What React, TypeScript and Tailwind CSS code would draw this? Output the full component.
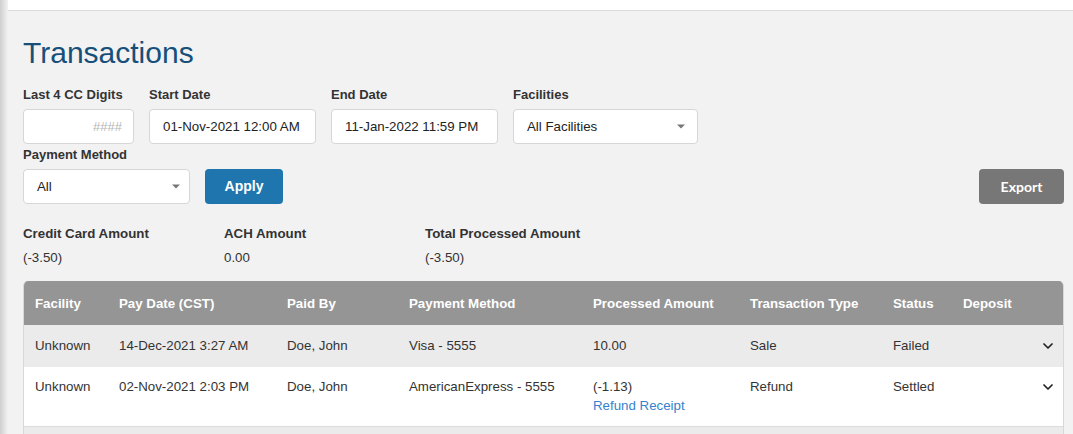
import React from "react";
import { ChevronDown } from "lucide-react";

const Caret = () => (
  <svg width="8" height="5" viewBox="0 0 8 5" className="shrink-0">
    <path d="M0 0.5 L8 0.5 L4 4.5 Z" fill="#777" />
  </svg>
);

const Label = ({ children }: { children: React.ReactNode }) => (
  <div className="text-[13px] leading-[20px] font-bold text-[#333] mb-[4px]">{children}</div>
);

const cols = "grid grid-cols-[84px_168px_122px_184px_157px_143px_70px_1fr]";

export default function App() {
  return (
    <div
      className="flex w-[1073px] h-[434px] overflow-hidden bg-[#f2f2f2] text-[#333]"
      style={{ fontFamily: '"Liberation Sans", Arial, sans-serif' }}
    >
      <div className="w-[8px] shrink-0 bg-gradient-to-r from-[#cfcfcf] to-[#f2f2f2]" />
      <div className="flex-1 flex flex-col">
        <div className="h-[11px] bg-white border-b border-[#dcdcdc] shrink-0" />
        <div className="pl-[15px] pr-[9px]">
          <h1 className="text-[30px] leading-[36px] text-[#16507a] mt-[24px] mb-[14px]">Transactions</h1>

          <div className="flex gap-[15px]">
            <div>
              <Label>Last 4 CC Digits</Label>
              <div className="w-[111px] h-[35px] bg-white border border-[#d6d6d6] rounded-[4px] flex items-center justify-end pr-[11px] text-[13px] text-[#b5b5b5]">
                ####
              </div>
            </div>
            <div>
              <Label>Start Date</Label>
              <div className="w-[167px] h-[35px] bg-white border border-[#d6d6d6] rounded-[4px] flex items-center pl-[13px] text-[13.3px] text-[#222]">
                01-Nov-2021 12:00 AM
              </div>
            </div>
            <div>
              <Label>End Date</Label>
              <div className="w-[167px] h-[35px] bg-white border border-[#d6d6d6] rounded-[4px] flex items-center pl-[13px] text-[13.3px] text-[#222]">
                11-Jan-2022 11:59 PM
              </div>
            </div>
            <div>
              <Label>Facilities</Label>
              <div className="w-[185px] h-[35px] bg-white border border-[#d6d6d6] rounded-[4px] flex items-center justify-between pl-[13px] pr-[12px] text-[13.3px] text-[#222]">
                <span>All Facilities</span>
                <Caret />
              </div>
            </div>
          </div>

          <div className="flex items-end mt-[1px]">
            <div>
              <Label>Payment Method</Label>
              <div className="w-[167px] h-[35px] bg-white border border-[#d6d6d6] rounded-[4px] flex items-center justify-between pl-[13px] pr-[9px] text-[13.3px] text-[#222]">
                <span>All</span>
                <Caret />
              </div>
            </div>
            <button className="ml-[15px] w-[78px] h-[35px] rounded-[4px] bg-[#1f76ae] text-white font-bold text-[14px]">
              Apply
            </button>
            <button
              className="ml-auto w-[85px] h-[35px] rounded-[4px] bg-[#777777] text-white font-bold text-[14px]"
              style={{ fontFamily: "Lato, sans-serif" }}
            >
              Export
            </button>
          </div>

          <div className="flex mt-[20px] text-[13.3px]">
            {[
              ["Credit Card Amount", "(-3.50)"],
              ["ACH Amount", "0.00"],
              ["Total Processed Amount", "(-3.50)"],
            ].map(([l, v]) => (
              <div key={l} className="w-[201px]">
                <div className="font-bold leading-[20px]">{l}</div>
                <div className="leading-[20px] mt-[4px]">{v}</div>
              </div>
            ))}
          </div>

          <div className="mt-[13px] rounded-t-[5px] border-x border-[#d8d8d8] overflow-hidden text-[13.3px]">
            <div className={`${cols} bg-[#959595] text-white font-bold h-[44px] items-center pl-[11px] pt-[1px]`}>
              <div>Facility</div>
              <div>Pay Date (CST)</div>
              <div>Paid By</div>
              <div>Payment Method</div>
              <div>Processed Amount</div>
              <div>Transaction Type</div>
              <div>Status</div>
              <div>Deposit</div>
            </div>
            <div className={`${cols} bg-[#ebebeb] pl-[11px] pt-[11px] pb-[11px] leading-[20px]`}>
              <div>Unknown</div>
              <div>14-Dec-2021 3:27 AM</div>
              <div>Doe, John</div>
              <div>Visa - 5555</div>
              <div>10.00</div>
              <div>Sale</div>
              <div>Failed</div>
              <div className="flex justify-end pr-[7px] items-center h-[20px]">
                <ChevronDown size={16} strokeWidth={2.6} color="#222" />
              </div>
            </div>
            <div className={`${cols} bg-white pl-[11px] pt-[10px] pb-[11px] leading-[20px] border-b border-[#dcdcdc]`}>
              <div>Unknown</div>
              <div>02-Nov-2021 2:03 PM</div>
              <div>Doe, John</div>
              <div>AmericanExpress - 5555</div>
              <div>
                <div>(-1.13)</div>
                <div className="text-[#3583cc] leading-[18px]">Refund Receipt</div>
              </div>
              <div>Refund</div>
              <div>Settled</div>
              <div className="flex justify-end pr-[7px] items-center h-[20px]">
                <ChevronDown size={16} strokeWidth={2.6} color="#222" />
              </div>
            </div>
            <div className="bg-[#ebebeb] h-[20px]" />
          </div>
        </div>
      </div>
    </div>
  );
}
